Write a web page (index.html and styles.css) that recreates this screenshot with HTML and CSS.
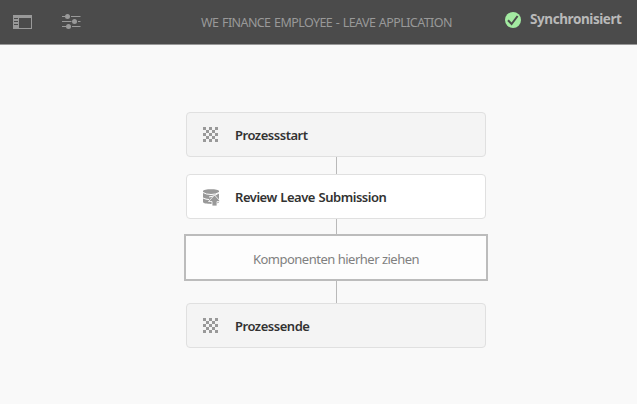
FILE: index.html
```
<!DOCTYPE html>
<html lang="de">
<head>
<meta charset="utf-8">
<title>We Finance Employee - Leave Application</title>
<link rel="stylesheet" href="styles.css">
</head>
<body>
<header class="toolbar">
  <div class="tools">
    <svg width="19" height="14" viewBox="0 0 19 14"><path fill="#999" fill-rule="evenodd" d="M0 0h19v14H0zM6 3v10h12V3z"/><path stroke="#4b4b4b" d="M1 3.500h4M1 6.500h4M1 9.500h4"/></svg>
    <svg width="19" height="16" viewBox="0 0 19 16" fill="#999"><path stroke="#999" d="M0 2.500h3M9 2.500h9.500M0 7.500h9.500M16 7.500h2.500M0 12.500h4M10 12.500h8.500"/><circle cx="5.500" cy="2.500" r="2.500"/><circle cx="12.500" cy="7.500" r="2.500"/><circle cx="6.500" cy="12.500" r="2.500"/></svg>
  </div>
  <h1 class="title"><span>WE FINANCE EMPLOYEE - LEAVE APPLICATION</span></h1>
  <div class="status">
    <svg width="16" height="16" viewBox="0 0 16 16"><circle cx="8" cy="8" r="8" fill="#a3eba1"/><path d="M3 8.300l3.600 3.700 6-8" fill="none" stroke="#4b4b4b" stroke-width="2"/></svg>
    <span class="status-text">Synchronisiert</span>
  </div>
</header>
<main class="flow">
  <div class="step terminal">
    <svg class="icon" width="17" height="18" viewBox="0 0 17 18" shape-rendering="crispEdges"><path fill="#999" d="M0 1h3v3H0zm6 0h3v3H6zm6 0h3v3h-3zM3 4h3v3H3zm6 0h3v3H9zM0 7h3v3H0zm6 0h3v3H6zm6 0h3v3h-3zM3 10h3v3H3zm6 0h3v3H9zM0 13h3v3H0zm6 0h3v3H6zm6 0h3v3h-3z"/></svg>
    <span class="label start">Prozessstart</span>
  </div>
  <div class="link link-a"></div>
  <div class="step">
    <svg class="icon" width="17" height="18" viewBox="0 0 17 18"><path fill="#999" d="M0 3C0 .5 16 .5 16 3v11c0 2.500-16 2.500-16 0z"/><path fill="none" stroke="#fff" d="M0 4.500q3 2 8 2t8-2M0 10q3 1.500 6 1.500M6 9q4 0 10-4"/><path fill="#999" stroke="#fff" stroke-width=".8" d="M11.500 7L17.500 13.500H14V18H9v-4.500H5.500z"/></svg>
    <span class="label review">Review Leave Submission</span>
  </div>
  <div class="link link-b"></div>
  <div class="drop"><span>Komponenten hierher ziehen</span></div>
  <div class="link link-c"></div>
  <div class="step terminal">
    <svg class="icon" width="17" height="18" viewBox="0 0 17 18" shape-rendering="crispEdges"><path fill="#999" d="M0 1h3v3H0zm6 0h3v3H6zm6 0h3v3h-3zM3 4h3v3H3zm6 0h3v3H9zM0 7h3v3H0zm6 0h3v3H6zm6 0h3v3h-3zM3 10h3v3H3zm6 0h3v3H9zM0 13h3v3H0zm6 0h3v3H6zm6 0h3v3h-3z"/></svg>
    <span class="label end">Prozessende</span>
  </div>
</main>
</body>
</html>
```
FILE: styles.css
```
* { box-sizing: border-box; }
body { margin: 0; height: 404px; overflow: hidden; background: #f9f9f9; font-family: "Noto Sans", "Open Sans", sans-serif; }
svg { display: block; flex: none; }
.toolbar { height: 45px; background: #4b4b4b; border-bottom: 1px solid #999; display: grid; grid-template-columns: 201px 252px 1fr; }
.tools { display: flex; align-items: flex-start; gap: 30px; padding: 15px 0 0 13px; }
.tools svg + svg { margin-top: -1px; }
.title { margin: 0; padding-top: 14px; font-size: 12.5px; line-height: 18px; font-weight: 400; letter-spacing: -0.58px; word-spacing: 0.9px; color: #999; white-space: nowrap; }
.status { display: flex; gap: 9px; padding: 12px 0 0 52px; }
.status-text { margin-top: -2px; font-size: 13.500px; line-height: 18px; font-weight: 700; letter-spacing: -0.42px; color: #b9b9b9; white-space: nowrap; }
.flow { padding: 67px 0 0 184px; display: flex; flex-direction: column; align-items: flex-start; }
.step { width: 300px; height: 45px; margin-left: 2px; border: 1px solid #e0e0e0; border-radius: 4px; background: #fff; display: flex; align-items: center; padding-left: 16px; }
.terminal { background: #f4f4f4; }
.icon { margin-right: 15px; }
.label { font-size: 13px; line-height: 18px; font-weight: 600; color: #323232; white-space: nowrap; }
.start, .end { letter-spacing: -0.47px; }
.review { letter-spacing: -0.48px; word-spacing: 0.7px; }
.link { width: 1px; margin-left: 152px; background: #b9b9b9; }
.link-a { height: 17px; }
.link-b { height: 15px; }
.link-c { height: 22px; }
.drop { width: 304px; height: 47px; border: 2px solid #bcbcbc; background: #fdfdfd; display: flex; align-items: center; justify-content: center; padding-top: 2px; font-size: 13px; letter-spacing: -0.5px; color: #808080; white-space: nowrap; }
```
